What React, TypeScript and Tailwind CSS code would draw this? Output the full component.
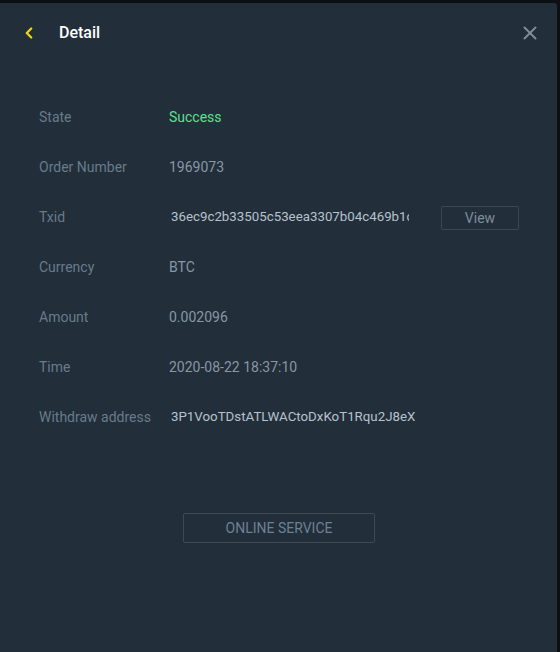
import { ChevronLeft, X } from "lucide-react";

const ROWS: { label: string; value: string; kind?: "ok" | "hash" | "addr" }[] = [
  { label: "State", value: "Success", kind: "ok" },
  { label: "Order Number", value: "1969073" },
  { label: "Txid", value: "36ec9c2b33505c53eea3307b04c469b1c8e0f2a7", kind: "hash" },
  { label: "Currency", value: "BTC" },
  { label: "Amount", value: "0.002096" },
  { label: "Time", value: "2020-08-22 18:37:10" },
  { label: "Withdraw address", value: "3P1VooTDstATLWACtoDxKoT1Rqu2J8eX", kind: "addr" },
];

export default function App() {
  return (
    <div className="h-[652px] w-[560px] bg-[#0c1015] pt-[3px] pr-[3px] font-['Roboto',sans-serif]">
      <div className="flex h-full flex-col rounded-tr-[3px] bg-[#222e3a]">
        {/* header */}
        <div className="flex h-[58px] items-center pl-[20px] pr-[16px] pt-[2px]">
          <ChevronLeft className="h-[18px] w-[18px] text-[#f5d312]" strokeWidth={3} />
          <span className="ml-[21px] text-[16px] font-medium text-white">Detail</span>
          <X className="ml-auto h-[22px] w-[22px] text-[#7b8c9a]" strokeWidth={2.2} />
        </div>

        <div className="mt-[31px] flex flex-col pl-[39px]">
          {ROWS.map((r) => (
            <div key={r.label} className="flex h-[50px] items-center text-[14px]">
              <div className="w-[130px] text-[#687b8b]">{r.label}</div>
              {r.kind === "ok" && <div className="text-[#5ee08f]">{r.value}</div>}
              {r.kind === "hash" && (
                <div className="w-[240px] overflow-hidden whitespace-nowrap pl-[2px] text-[13.3px] text-[#b6c2cc]">
                  {r.value}
                </div>
              )}
              {r.kind === "addr" && (
                <div className="whitespace-nowrap pl-[2px] text-[13.3px] text-[#b6c2cc]">{r.value}</div>
              )}
              {!r.kind && <div className="text-[#8797a5]">{r.value}</div>}
              {r.label === "Txid" && (
                <button className="mt-[2px] ml-[32px] h-[24px] w-[78px] rounded-[2px] border border-[#3a4855] text-[14px] text-[#7c8d9b]">
                  View
                </button>
              )}
            </div>
          ))}
        </div>

        <div className="mt-[71px] flex justify-center pl-[1px]">
          <button className="h-[30px] w-[192px] rounded-[2px] border border-[#3c4a57] text-[14px] text-[#6c8193]">
            ONLINE SERVICE
          </button>
        </div>
      </div>
    </div>
  );
}
